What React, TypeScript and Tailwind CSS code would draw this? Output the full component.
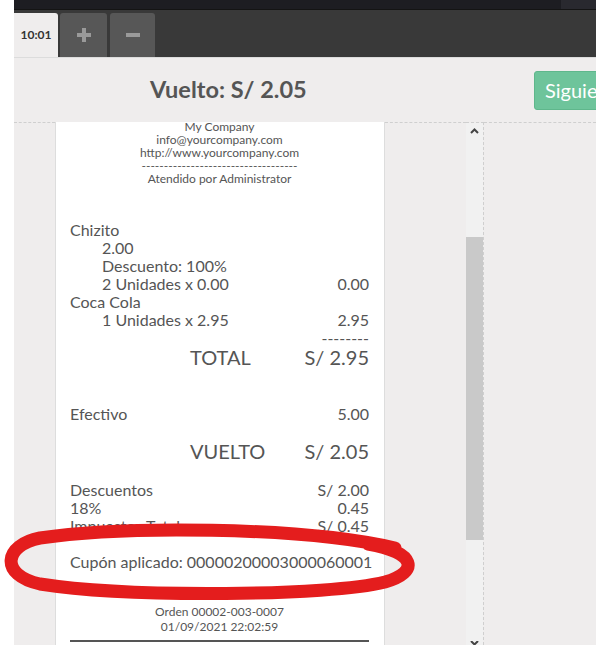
import React from 'react';

const font = { fontFamily: 'Lato, "Open Sans", sans-serif' };

function Row({ left, right, indent }: { left: string; right?: string; indent?: boolean }) {
  return (
    <div className="flex justify-between h-[18px] leading-[18px] whitespace-nowrap">
      <span className={indent ? 'pl-[32px]' : ''}>{left}</span>
      {right && <span>{right}</span>}
    </div>
  );
}

function Amount({ label, value }: { label: string; value: string }) {
  return (
    <div className="flex justify-between h-[20px] leading-[20px] text-[20px] pl-[120px]">
      <span>{label}</span>
      <span>{value}</span>
    </div>
  );
}

function Receipt() {
  return (
    <div className="w-[330px] shrink-0 bg-white border-l border-r border-[#dddddd] pl-[14px] pr-[15px] text-[16px] text-[#555555]">
      <div className="-mt-[2px] text-center text-[12px] leading-[13px]">
        <div>My Company</div>
        <div>info@yourcompany.com</div>
        <div>http://www.yourcompany.com</div>
        <div>-----------------------------------</div>
        <div>Atendido por Administrator</div>
      </div>
      <div className="mt-[36px]">
        <Row left="Chizito" />
        <Row left="2.00" indent />
        <Row left="Descuento: 100%" indent />
        <Row left="2 Unidades x 0.00" right="0.00" indent />
        <Row left="Coca Cola" />
        <Row left="1 Unidades x 2.95" right="2.95" indent />
        <div className="text-right h-[18px] leading-[18px]">--------</div>
        <Amount label="TOTAL" value="S/ 2.95" />
      </div>
      <div className="mt-[38px]">
        <Row left="Efectivo" right="5.00" />
      </div>
      <div className="mt-[18px]">
        <Amount label="VUELTO" value="S/ 2.05" />
      </div>
      <div className="mt-[20px]">
        <Row left="Descuentos" right="S/ 2.00" />
        <Row left="18%" right="0.45" />
        <Row left="Impuestos Totales" right="S/ 0.45" />
      </div>
      <div className="mt-[18px]">
        <Row left="Cupón aplicado: 00000200003000060001" />
      </div>
      <div className="mt-[33px] text-center text-[12px] leading-[15px]">
        <div>Orden 00002-003-0007</div>
        <div>01/09/2021 22:02:59</div>
      </div>
      <div className="mt-[6px] border-t-2 border-[#555555]" />
    </div>
  );
}

function TabGlyph({ minus }: { minus?: boolean }) {
  return (
    <svg width="14" height="14" viewBox="0 0 14 14">
      <rect x="0" y="5" width="14" height="4" fill="#9a9a9a" />
      {!minus && <rect x="5" y="0" width="4" height="14" fill="#9a9a9a" />}
    </svg>
  );
}

export default function App() {
  return (
    <div className="relative w-[596px] h-[645px] overflow-hidden flex bg-white" style={font}>
      <div className="w-[14px] shrink-0 bg-white" />
      <div className="flex-1 flex flex-col min-w-0">
        {/* top bar */}
        <div className="flex h-[9px] shrink-0">
          <div className="w-[547px] bg-[#1d1d22]" />
          <div className="flex-1 bg-[#29292f]" />
        </div>
        <div className="h-px bg-[#141414] shrink-0" />
        {/* tabs */}
        <div className="h-[47px] shrink-0 bg-[#393939] flex items-end">
          <div className="w-[44px] h-[44px] bg-[#efeded] rounded-tr-[3px] flex items-center justify-center text-[12px] font-bold text-[#333333]">
            10:01
          </div>
          <div className="ml-[2px] w-[47px] h-[44px] bg-[#575757] rounded-t-[3px] flex items-center justify-center">
            <TabGlyph />
          </div>
          <div className="ml-[3px] w-[45px] h-[44px] bg-[#575757] rounded-t-[3px] flex items-center justify-center">
            <TabGlyph minus />
          </div>
        </div>
        {/* header */}
        <div className="h-[65px] shrink-0 bg-[#efeded] border-t border-[#dcdcdc] flex items-center">
          <div className="w-[520px] shrink-0 pl-[136px] text-[23.5px] font-bold text-[#555555]">
            Vuelto: S/ 2.05
          </div>
          <div className="w-[110px] shrink-0 h-[39px] bg-[#6ec49b] border border-[#5fb78c] rounded-[3px] text-white text-[20px] leading-[37px] pl-[10px] whitespace-nowrap">
            Siguiente
          </div>
        </div>
        {/* body */}
        <div className="flex-1 flex bg-[#efeded] min-h-0">
          <div className="w-[41px] shrink-0 border-t border-dashed border-[#cfcfcf]" />
          <Receipt />
          <div className="w-[81px] shrink-0 border-t border-dashed border-[#cfcfcf]" />
          <div className="w-[18px] shrink-0 border-t border-r border-dashed border-[#cfcfcf] flex flex-col">
            <div className="h-[114px] bg-[#f1f1f1] flex justify-center pt-[5px]">
              <svg width="9" height="6" viewBox="0 0 9 6">
                <polyline points="1,5 4.5,1.5 8,5" fill="none" stroke="#444" strokeWidth="2" />
              </svg>
            </div>
            <div className="h-[303px] bg-[#c9c9c9]" />
            <div className="flex-1 bg-[#f1f1f1] flex justify-center items-end">
              <svg width="9" height="4" viewBox="0 0 9 4">
                <polyline points="1,0 4.5,3.5 8,0" fill="none" stroke="#444" strokeWidth="2" />
              </svg>
            </div>
          </div>
          <div className="flex-1 border-t border-dashed border-[#cfcfcf]" />
        </div>
      </div>
      {/* red marker annotation */}
      <svg className="absolute left-0 top-0 pointer-events-none" width="596" height="645">
        <path
          d="M 395 548 C 300 526, 120 526, 40 538 C 4 545, -1 575, 40 584 C 130 598, 330 596, 385 582 C 420 572, 416 552, 368 544"
          fill="none"
          stroke="#e41d1d"
          strokeWidth="13"
          strokeLinecap="round"
          strokeLinejoin="round"
        />
      </svg>
    </div>
  );
}
